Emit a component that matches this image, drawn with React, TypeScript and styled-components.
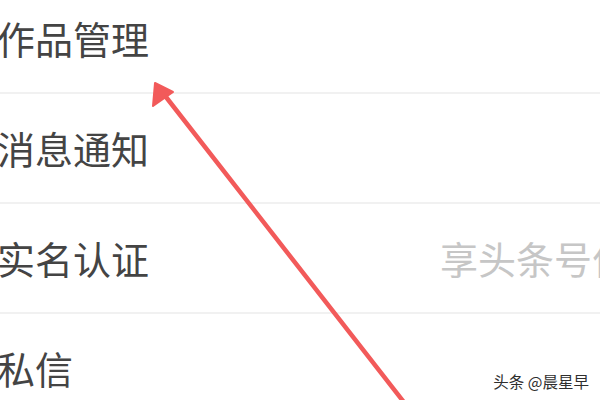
import React from 'react';
import styled, { createGlobalStyle } from 'styled-components';

const GlobalStyle = createGlobalStyle`
  html, body {
    margin: 0;
    padding: 0;
    background: #ffffff;
  }
`;

interface IRow {
  label: string;
  value?: string;
}

const rows: IRow[] = [
  { label: '作品管理' },
  { label: '消息通知' },
  { label: '实名认证', value: '享头条号作品' },
  { label: '私信' },
];

const App = () => {
  return (
    <>
      <GlobalStyle />
      <Wrapper>
        <List>
          {rows.map(row => (
            <Row key={row.label}>
              <Label>{row.label}</Label>
              {row.value && <Value>{row.value}</Value>}
            </Row>
          ))}
        </List>

        <Arrow width="600" height="400" viewBox="0 0 600 400">
          <line x1="410" y1="410" x2="166" y2="97" stroke="#f25a5a" strokeWidth="4.5" strokeLinecap="round" />
          <polygon points="155,83 153,106 173,92" fill="#f25a5a" stroke="#f25a5a" strokeWidth="2" strokeLinejoin="round" />
        </Arrow>

        <Watermark>头条 @晨星早</Watermark>
      </Wrapper>
    </>
  );
};

const Wrapper = styled.div`
  position: relative;
  width: 600px;
  height: 400px;
  overflow: hidden;
  background: #ffffff;
  font-family: 'Noto Sans CJK SC', 'Noto Sans', sans-serif;
`;

const List = styled.div`
  margin-top: -16px;
  margin-left: -3px;
  display: flex;
  flex-direction: column;
`;

const Row = styled.div`
  height: 110px;
  display: flex;
  align-items: center;
  border-bottom: 2px solid #f1f1f1;
  box-sizing: border-box;
  white-space: nowrap;
`;

const Label = styled.div`
  flex: 0 0 443px;
  font-size: 38px;
  color: #444444;
  line-height: 1;
`;

const Value = styled.div`
  flex: 0 0 auto;
  font-size: 38px;
  color: #c6c6c6;
  line-height: 1;
`;

const Arrow = styled.svg`
  position: absolute;
  left: 0;
  top: 0;
  pointer-events: none;
`;

const Watermark = styled.div`
  position: absolute;
  right: 11px;
  bottom: 8px;
  font-size: 15.5px;
  color: #2e2e2e;
  text-shadow: 0 0 2px #ffffff, 0 0 2px #ffffff;
`;

export default App;
